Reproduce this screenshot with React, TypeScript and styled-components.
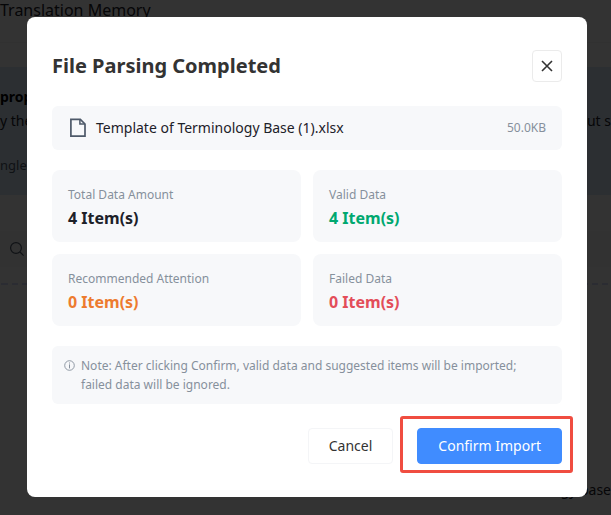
import React from "react";
import styled, { createGlobalStyle } from "styled-components";

const GlobalStyle = createGlobalStyle`
  *, *::before, *::after { box-sizing: border-box; }
  html, body, #root { height: 100%; }
  body {
    margin: 0;
    overflow: hidden;
    background: #ffffff;
    color: #1d2129;
    font-family: "Noto Sans", "Open Sans", sans-serif;
    font-size: 14px;
    line-height: 20px;
  }
  h1, h2, p, dl, dt, dd { margin: 0; }
  button { font: inherit; cursor: pointer; }
`;

const Page = styled.div`
  display: flex;
  flex-direction: column;
  min-height: 100%;
  white-space: nowrap;
`;

const PageHeader = styled.header`
  height: 43px;
  border-bottom: 1px solid #f2f3f5;
`;

const PageTitle = styled.h1`
  font-size: 16px;
  line-height: 20px;
  font-weight: 400;
  color: #1d2129;
`;

const Banner = styled.section`
  display: flex;
  flex-direction: column;
  gap: 4px;
  height: 128px;
  margin-top: 24px;
  padding-top: 20px;
  background: #dcecfa;
`;

const BannerTitle = styled.h2`
  font-size: 14px;
  line-height: 20px;
  font-weight: 700;
  color: #000000;
`;

const BannerLine = styled.p`
  display: flex;
  justify-content: space-between;
`;

const BannerHint = styled.p`
  margin-top: 20px;
  font-size: 13px;
  color: #4e5969;
`;

const SearchRow = styled.div`
  display: flex;
  align-items: center;
  height: 36px;
  margin-top: 36px;
  padding-left: 9px;
  background: #f8f8fa;
`;

const DashedRule = styled.div`
  height: 2px;
  margin-top: 16px;
  background: repeating-linear-gradient(90deg, #d8dcf8 0 6px, transparent 6px 10px) 2px 0;
`;

const PageFooter = styled.footer`
  margin-top: auto;
  padding-bottom: 15px;
  text-align: right;
`;

const Overlay = styled.div`
  position: fixed;
  inset: 0;
  display: flex;
  align-items: center;
  justify-content: center;
  padding: 17px 24px 18px 27px;
  background: rgba(0, 0, 0, 0.8);
`;

const Dialog = styled.section`
  display: flex;
  flex-direction: column;
  gap: 20px;
  width: 100%;
  max-width: 560px;
  padding: 33px 25px 33px;
  border-radius: 8px;
  background: #ffffff;
`;

const DialogHeader = styled.header`
  display: flex;
  align-items: center;
  justify-content: space-between;
  margin-bottom: 4px;
`;

const DialogTitle = styled.h2`
  font-size: 20px;
  line-height: 28px;
  font-weight: 700;
  color: #333333;
`;

const CloseButton = styled.button`
  display: flex;
  align-items: center;
  justify-content: center;
  width: 30px;
  height: 32px;
  padding: 0;
  border: 1px solid #ebebeb;
  border-radius: 4px;
  background: #ffffff;
  color: #333333;
`;

const FileRow = styled.div`
  display: flex;
  align-items: center;
  gap: 8px;
  height: 44px;
  padding: 0 16px;
  border-radius: 6px;
  background: #f7f8fa;
`;

const FileName = styled.span`
  flex: 1;
`;

const FileSize = styled.span`
  font-size: 12px;
  color: #86909c;
`;

const Stats = styled.dl`
  display: grid;
  grid-template-columns: 1fr 1fr;
  gap: 12px;
`;

const StatCard = styled.div`
  padding: 14px 16px 12px;
  border-radius: 8px;
  background: #f7f8fa;
`;

const StatLabel = styled.dt`
  font-size: 12px;
  line-height: 22px;
  color: #86909c;
`;

const StatValue = styled.dd<{ $color: string }>`
  font-size: 16px;
  line-height: 24px;
  font-weight: 700;
  color: ${(p) => p.$color};
`;

const Note = styled.div`
  display: flex;
  gap: 6px;
  padding: 10px 24px 10px 12px;
  border-radius: 6px;
  background: #f7f8fa;
  font-size: 12px;
  line-height: 19px;
  color: #86909c;

  svg { flex: none; margin-top: 4px; }
`;

const Actions = styled.footer`
  display: flex;
  justify-content: flex-end;
  gap: 24px;
  margin-top: 4px;
`;

const Button = styled.button<{ $primary?: boolean }>`
  height: 36px;
  padding: 0 20px;
  border: 1px solid ${(p) => (p.$primary ? "#408cff" : "#f4f5f7")};
  border-radius: 4px;
  background: ${(p) => (p.$primary ? "#408cff" : "#ffffff")};
  color: ${(p) => (p.$primary ? "#ffffff" : "#333333")};
`;

const Highlighted = styled.div`
  position: relative;

  &::after {
    content: "";
    position: absolute;
    inset: -12px -11px -9px -17px;
    border: 3px solid #f04d40;
    border-radius: 3px;
    pointer-events: none;
  }
`;

const stats = [
  { label: "Total Data Amount", value: "4 Item(s)", color: "#1d2129" },
  { label: "Valid Data", value: "4 Item(s)", color: "#00a870" },
  { label: "Recommended Attention", value: "0 Item(s)", color: "#ed7b2f" },
  { label: "Failed Data", value: "0 Item(s)", color: "#e34d59" },
];

const SearchIcon = () => (
  <svg width="16" height="16" viewBox="0 0 16 16" fill="none" stroke="#4e5969" strokeWidth="1.2" aria-hidden="true">
    <circle cx="7" cy="7" r="5.4" />
    <path d="M11 11l3.6 3.6" />
  </svg>
);

const CloseIcon = () => (
  <svg width="12" height="12" viewBox="0 0 12 12" fill="none" stroke="currentColor" strokeWidth="1.6" aria-hidden="true">
    <path d="M1 1l10 10M11 1L1 11" />
  </svg>
);

const FileIcon = () => (
  <svg width="20" height="20" viewBox="0 0 20 20" fill="none" stroke="#4e5969" strokeWidth="1.7" aria-hidden="true">
    <path d="M2.9 1.3h9.4l4.7 4.7v12.2H2.9z" />
    <path d="M11.9 1.3v4.8h5.1" strokeWidth="1.5" />
  </svg>
);

const InfoIcon = () => (
  <svg width="11" height="11" viewBox="0 0 11 11" fill="none" stroke="#86909c" aria-hidden="true">
    <circle cx="5.5" cy="5.5" r="4.8" strokeWidth="0.9" />
    <path d="M5.5 2.5v1M5.5 4.4v4" />
  </svg>
);

export default function App() {
  return (
    <>
      <GlobalStyle />
      <Page>
        <PageHeader>
          <PageTitle>Translation Memory</PageTitle>
        </PageHeader>
        <Banner>
          <BannerTitle>prop</BannerTitle>
          <BannerLine>
            <span>y the</span>
            <span>out s</span>
          </BannerLine>
          <BannerHint>ngle</BannerHint>
        </Banner>
        <SearchRow>
          <SearchIcon />
        </SearchRow>
        <DashedRule />
        <PageFooter>gy base</PageFooter>
      </Page>
      <Overlay>
        <Dialog role="dialog" aria-modal="true" aria-labelledby="dialog-title">
          <DialogHeader>
            <DialogTitle id="dialog-title">File Parsing Completed</DialogTitle>
            <CloseButton type="button" aria-label="Close">
              <CloseIcon />
            </CloseButton>
          </DialogHeader>
          <FileRow>
            <FileIcon />
            <FileName>Template of Terminology Base (1).xlsx</FileName>
            <FileSize>50.0KB</FileSize>
          </FileRow>
          <Stats>
            {stats.map((s) => (
              <StatCard key={s.label}>
                <StatLabel>{s.label}</StatLabel>
                <StatValue $color={s.color}>{s.value}</StatValue>
              </StatCard>
            ))}
          </Stats>
          <Note>
            <InfoIcon />
            <p>
              Note: After clicking Confirm, valid data and suggested items will be imported; failed data will be
              ignored.
            </p>
          </Note>
          <Actions>
            <Button type="button">Cancel</Button>
            <Highlighted>
              <Button type="button" $primary>
                Confirm Import
              </Button>
            </Highlighted>
          </Actions>
        </Dialog>
      </Overlay>
    </>
  );
}
